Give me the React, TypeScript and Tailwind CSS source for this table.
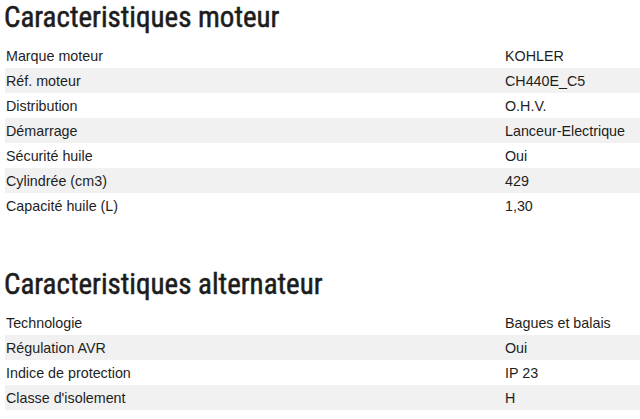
import React from "react";

const moteur: [string, string][] = [
  ["Marque moteur", "KOHLER"],
  ["Réf. moteur", "CH440E_C5"],
  ["Distribution", "O.H.V."],
  ["Démarrage", "Lanceur-Electrique"],
  ["Sécurité huile", "Oui"],
  ["Cylindrée (cm3)", "429"],
  ["Capacité huile (L)", "1,30"],
];

const alternateur: [string, string][] = [
  ["Technologie", "Bagues et balais"],
  ["Régulation AVR", "Oui"],
  ["Indice de protection", "IP 23"],
  ["Classe d'isolement", "H"],
];

function Section({ title, rows }: { title: string; rows: [string, string][] }) {
  return (
    <div>
      <h2 className="text-[29px] leading-[34px] font-normal text-[#1c1c1c] pl-[4px] [-webkit-text-stroke:0.5px_#1c1c1c] font-['Liberation_Sans_Narrow','Arial_Narrow','Roboto_Condensed',sans-serif]">
        {title}
      </h2>
      <div className="mt-[9px] ml-[5px]">
        {rows.map(([k, v], i) => (
          <div
            key={k}
            className={`flex h-[25px] leading-[20px] pt-[3px] text-[14.3px] text-[#1e1e1e] ${i % 2 === 1 ? "bg-[#f1f1f1]" : ""}`}
          >
            <div className="w-[500px] pl-[1px]">{k}</div>
            <div>{v}</div>
          </div>
        ))}
      </div>
    </div>
  );
}

export default function App() {
  return (
    <div className="w-[640px] h-[419px] bg-white overflow-hidden font-['Liberation_Sans',Arial,sans-serif]">
      <Section title="Caracteristiques moteur" rows={moteur} />
      <div className="h-[49px]" />
      <Section title="Caracteristiques alternateur" rows={alternateur} />
    </div>
  );
}
